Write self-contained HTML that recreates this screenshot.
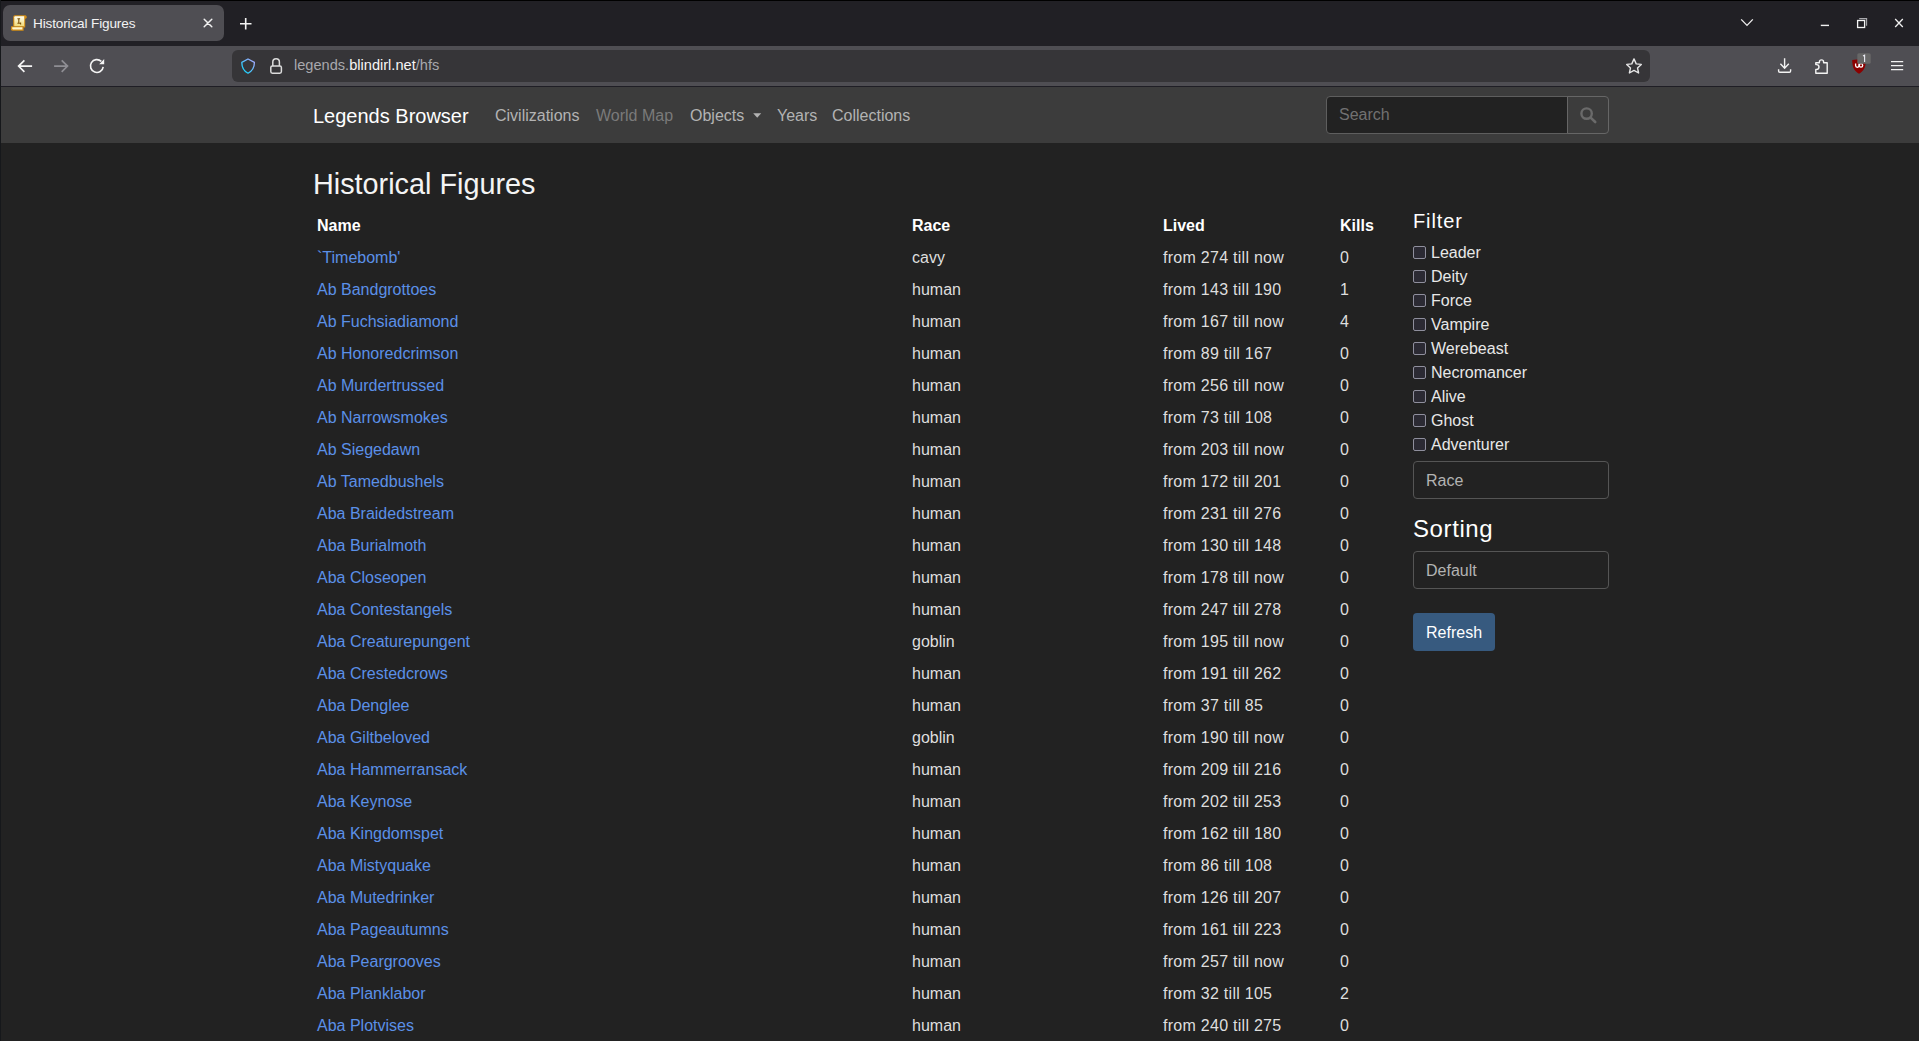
<!DOCTYPE html>
<html><head><meta charset="utf-8">
<style>
*{box-sizing:border-box}
html,body{margin:0;padding:0}
body{width:1919px;height:1041px;overflow:hidden;position:relative;background:#222;font-family:"Liberation Sans",sans-serif;color:#dedede}
.abs{position:absolute}
#wborder{left:0;top:0;width:1px;height:1041px;background:#16181b;z-index:5}
#tborder{left:1px;top:0;width:1918px;height:1px;background:#000;z-index:5}
#tabstrip{left:0;top:0;width:1919px;height:46px;background:#212025}
#tab{left:3px;top:5px;width:221px;height:36px;border-radius:7px;background:#4f4e53}
#tabtitle{left:33px;top:15.5px;font-size:13.6px;letter-spacing:-0.15px;color:#f3f3f3;white-space:nowrap}
#toolbar{left:0;top:46px;width:1919px;height:40px;background:#4f4e53}
#tline{left:0;top:86px;width:1919px;height:1px;background:#1f1e25}
#urlbar{left:232px;top:50px;width:1418px;height:32px;border-radius:6px;background:#363538}
#urltext{left:294px;top:57px;font-size:14.6px;color:#a8a8ad;white-space:nowrap}
#urltext b{font-weight:normal;color:#f6f6f6}
#navbar{left:1px;top:87px;width:1918px;height:56px;background:#3c3c3c}
.brand{left:313px;top:105px;font-size:20px;color:#fff;white-space:nowrap}
.nl{top:107px;font-size:16px;color:#b3b3b3;white-space:nowrap}
.nl.dis{color:#7a7a7a}
#search{left:1326px;top:96px;width:242px;height:38px;background:#222;border:1px solid #5e5e5e;border-radius:4px 0 0 4px}
#search span{position:absolute;left:12px;top:9px;font-size:16px;color:#717171}
#sbtn{left:1567px;top:96px;width:42px;height:38px;border:1px solid #666;border-radius:0 4px 4px 0}
h3{position:absolute;left:313px;top:168px;margin:0;font-weight:normal;font-size:28.8px;color:#f4f4f4;white-space:nowrap}
table{position:absolute;left:313px;top:210px;border-collapse:collapse;table-layout:fixed;width:1076px}
td,th{padding:4px 4px;height:32px;line-height:24px;font-size:16px;text-align:left;white-space:nowrap;vertical-align:top}
th{font-weight:bold;color:#fff}
td{color:#dedede}
td a{color:#5b90e8}
td:nth-child(3){letter-spacing:0.27px}
#side{position:absolute;left:1413px;top:209px;width:196px}
h5{margin:0 0 8px;letter-spacing:0.9px;font-size:20px;line-height:24px;font-weight:normal;color:#fff}
h4{margin:16px 0 7px;letter-spacing:0.6px;font-size:24px;line-height:28.8px;font-weight:normal;color:#fff}
.chk{position:relative;height:24px;line-height:24px;font-size:16px;color:#e8e8e8;padding-left:18px;white-space:nowrap}
.cb{position:absolute;left:0;top:5px;width:13px;height:13px;border:1px solid #8f8f9d;border-radius:2px;background:#2b2a33}
.fc{margin-top:4px;height:38px;border:1px solid #555;border-radius:4px;padding:7px 12px 5px;font-size:16px;line-height:24px;color:#b3b3b3}
.btn{margin-top:24px;width:82px;height:38px;background:#375a7f;border-radius:4px;color:#fff;font-size:16px;line-height:24px;padding:8px 13px 6px}
</style></head><body>
<div class="abs" id="tabstrip"></div>
<div class="abs" id="tab"></div>
<div class="abs" id="tabtitle">Historical Figures</div>
<div class="abs" id="toolbar"></div>
<div class="abs" id="tline"></div>
<div class="abs" id="urlbar"></div>
<div class="abs" id="urltext">legends.<b>blindirl.net</b>/hfs</div>
<div class="abs" id="wborder"></div>
<div class="abs" id="tborder"></div>
<div class="abs" id="navbar"></div>
<svg class="abs" style="left:0;top:0;z-index:4" width="1919" height="143" viewBox="0 0 1919 143">
<defs>
<linearGradient id="shg" x1="0" y1="1" x2="1" y2="0"><stop offset="0" stop-color="#00ddff"/><stop offset="1" stop-color="#b4a4ff"/></linearGradient>
<linearGradient id="scroll" x1="0" y1="0" x2="0" y2="1"><stop offset="0" stop-color="#fffef0"/><stop offset="1" stop-color="#f0d870"/></linearGradient>
</defs>
<!-- favicon scroll -->
<g>
<path d="M13.2 17 Q13.2 15.2 15 15.2 H25.4 Q27 15.6 26.8 17.4 Q26.4 18.6 25.2 18.8 V27.4 L23.6 27.4 V26 H13.2 Z" fill="#d48e16"/>
<path d="M14.3 17.2 Q14.3 16.3 15.2 16.3 H24.2 V26.6 H14.3 Z" fill="url(#scroll)"/>
<path d="M11.4 26.2 Q11 26.2 11 27 V29.4 Q11.2 30.8 12.6 30.8 H23.6 V26.2 Z" fill="#d48e16"/>
<path d="M12.2 27.3 H22.4 V29.4 H13 Q12.2 29.4 12.2 28.6 Z" fill="#fff6cc"/>
<path d="M17.4 18.7 H20.1 M18.8 18.7 V23.2 M17.4 23.2 H20.6 M20.6 22.4 V24.6" stroke="#7e5208" stroke-width="1.1" fill="none"/>
</g>
<!-- tab close -->
<path d="M204.2 19.2 L211.8 26.8 M211.8 19.2 L204.2 26.8" stroke="#f0f0f0" stroke-width="1.5" stroke-linecap="round"/>
<!-- new tab plus -->
<path d="M240 23.7 H251.5 M245.7 18 V29.4" stroke="#f3f3f3" stroke-width="1.6" stroke-linecap="butt"/>
<!-- chevron -->
<path d="M1741.2 19.4 L1747 25.4 L1752.8 19.4" stroke="#f0f0f0" stroke-width="1.3" fill="none"/>
<!-- minimize -->
<path d="M1820.8 25.4 H1829" stroke="#f0f0f0" stroke-width="1.4"/>
<!-- restore -->
<rect x="1857.6" y="20.5" width="7" height="7" stroke="#f4f4f4" stroke-width="1.3" fill="none"/>
<path d="M1859.2 18.6 H1866.6 V25.8" stroke="#a9a9ad" stroke-width="1.1" fill="none"/>
<!-- close -->
<path d="M1895.2 19 L1902.8 27 M1902.8 19 L1895.2 27" stroke="#f0f0f0" stroke-width="1.3"/>
<!-- back -->
<path d="M18.6 66.1 H32.1 M24.4 60.4 L18.6 66.1 L24.4 71.8" stroke="#f5f5f5" stroke-width="1.7" fill="none"/>
<!-- forward -->
<path d="M54.1 66.1 H67.5 M61.7 60.4 L67.5 66.1 L61.7 71.8" stroke="#8f8e94" stroke-width="1.7" fill="none"/>
<!-- reload -->
<path d="M103.2 66.8 A6.4 6.4 0 1 1 101.3 61.4" stroke="#f5f5f5" stroke-width="1.6" fill="none"/>
<path d="M99.2 64.2 L104.2 64.2 L104.2 59 Z" fill="#f5f5f5"/>
<!-- shield -->
<path d="M248 59 L254.4 62.4 C254.4 67.6 252.4 70.8 248 73.2 C243.6 70.8 241.8 67.6 241.8 62.4 Z" stroke="url(#shg)" stroke-width="1.3" fill="none" stroke-linejoin="round"/>
<!-- lock -->
<path d="M272.8 66 V62 A3.3 3.3 0 0 1 279.4 62 V66" stroke="#dcdcdc" stroke-width="1.5" fill="none"/>
<rect x="270.8" y="66" width="10.6" height="7.2" rx="1.6" stroke="#dcdcdc" stroke-width="1.5" fill="none"/>
<!-- star -->
<path d="M1634 58.9 L1636.2 63.9 L1641.3 64.4 L1637.5 67.9 L1638.6 73 L1634 70.4 L1629.4 73 L1630.5 67.9 L1626.7 64.4 L1631.8 63.9 Z" stroke="#e6e6e6" stroke-width="1.4" fill="none" stroke-linejoin="round"/>
<!-- download -->
<path d="M1784.6 58.2 V68.4 M1780.4 63.8 L1784.6 68.2 L1788.8 63.8" stroke="#f3f3f3" stroke-width="1.4" fill="none"/>
<path d="M1778.6 69.2 V71 A1.2 1.2 0 0 0 1779.8 72.2 H1789.4 A1.2 1.2 0 0 0 1790.6 71 V69.2" stroke="#f3f3f3" stroke-width="1.4" fill="none"/>
<!-- puzzle -->
<path d="M1815.8 62.8 H1819.4 V62 A2.1 2.1 0 0 1 1823.6 62 V62.8 H1827.2 V73.2 H1815.8 V69.4 H1816.6 A2.4 2.4 0 0 0 1816.6 64.6 H1815.8 Z" stroke="#f3f3f3" stroke-width="1.4" fill="none" stroke-linejoin="round"/>
<!-- ublock -->
<path d="M1852.2 60 L1859 59.2 L1865.8 60 C1865.8 67.4 1863.6 71.2 1859 73.8 C1854.4 71.2 1852.2 67.4 1852.2 60 Z" fill="#8c0000"/>
<path d="M1855.6 63.4 V65.6 A1.7 1.7 0 0 0 1859 65.6 V63.4" stroke="#fff" stroke-width="1.3" fill="none"/>
<circle cx="1861" cy="65.4" r="1.7" stroke="#fff" stroke-width="1.3" fill="none"/>
<rect x="1857.3" y="53.2" width="13.4" height="10.6" rx="1.6" fill="#676767"/>
<path d="M1863 56 L1864.6 55.2 V62" stroke="#ececf4" stroke-width="1.1" fill="none"/>
<!-- hamburger -->
<path d="M1891 61.7 H1903.2 M1891 65.6 H1903.2 M1891 69.6 H1903.2" stroke="#f3f3f3" stroke-width="1.3"/>
<!-- navbar caret -->
<path d="M753.2 113.2 H761.2 L757.2 117.8 Z" fill="#b3b3b3"/>
<!-- search icon -->
<circle cx="1586.6" cy="113.6" r="5.2" stroke="#6a6a6a" stroke-width="2.4" fill="none"/>
<path d="M1590.6 117.6 L1595.2 122" stroke="#6a6a6a" stroke-width="2.6" stroke-linecap="round"/>
</svg>

<div class="abs brand">Legends Browser</div>
<div class="abs nl" style="left:495px">Civilizations</div>
<div class="abs nl dis" style="left:596px">World Map</div>
<div class="abs nl" style="left:690px">Objects</div>
<div class="abs nl" style="left:777px">Years</div>
<div class="abs nl" style="left:832px">Collections</div>
<div class="abs" id="search"><span>Search</span></div>
<div class="abs" id="sbtn"></div>
<h3>Historical Figures</h3>
<table>
<colgroup><col style="width:595px"><col style="width:251px"><col style="width:177px"><col style="width:53px"></colgroup>
<tr><th>Name</th><th>Race</th><th>Lived</th><th>Kills</th></tr>
<tr><td><a>`Timebomb'</a></td><td>cavy</td><td>from 274 till now</td><td>0</td></tr>
<tr><td><a>Ab Bandgrottoes</a></td><td>human</td><td>from 143 till 190</td><td>1</td></tr>
<tr><td><a>Ab Fuchsiadiamond</a></td><td>human</td><td>from 167 till now</td><td>4</td></tr>
<tr><td><a>Ab Honoredcrimson</a></td><td>human</td><td>from 89 till 167</td><td>0</td></tr>
<tr><td><a>Ab Murdertrussed</a></td><td>human</td><td>from 256 till now</td><td>0</td></tr>
<tr><td><a>Ab Narrowsmokes</a></td><td>human</td><td>from 73 till 108</td><td>0</td></tr>
<tr><td><a>Ab Siegedawn</a></td><td>human</td><td>from 203 till now</td><td>0</td></tr>
<tr><td><a>Ab Tamedbushels</a></td><td>human</td><td>from 172 till 201</td><td>0</td></tr>
<tr><td><a>Aba Braidedstream</a></td><td>human</td><td>from 231 till 276</td><td>0</td></tr>
<tr><td><a>Aba Burialmoth</a></td><td>human</td><td>from 130 till 148</td><td>0</td></tr>
<tr><td><a>Aba Closeopen</a></td><td>human</td><td>from 178 till now</td><td>0</td></tr>
<tr><td><a>Aba Contestangels</a></td><td>human</td><td>from 247 till 278</td><td>0</td></tr>
<tr><td><a>Aba Creaturepungent</a></td><td>goblin</td><td>from 195 till now</td><td>0</td></tr>
<tr><td><a>Aba Crestedcrows</a></td><td>human</td><td>from 191 till 262</td><td>0</td></tr>
<tr><td><a>Aba Denglee</a></td><td>human</td><td>from 37 till 85</td><td>0</td></tr>
<tr><td><a>Aba Giltbeloved</a></td><td>goblin</td><td>from 190 till now</td><td>0</td></tr>
<tr><td><a>Aba Hammerransack</a></td><td>human</td><td>from 209 till 216</td><td>0</td></tr>
<tr><td><a>Aba Keynose</a></td><td>human</td><td>from 202 till 253</td><td>0</td></tr>
<tr><td><a>Aba Kingdomspet</a></td><td>human</td><td>from 162 till 180</td><td>0</td></tr>
<tr><td><a>Aba Mistyquake</a></td><td>human</td><td>from 86 till 108</td><td>0</td></tr>
<tr><td><a>Aba Mutedrinker</a></td><td>human</td><td>from 126 till 207</td><td>0</td></tr>
<tr><td><a>Aba Pageautumns</a></td><td>human</td><td>from 161 till 223</td><td>0</td></tr>
<tr><td><a>Aba Peargrooves</a></td><td>human</td><td>from 257 till now</td><td>0</td></tr>
<tr><td><a>Aba Planklabor</a></td><td>human</td><td>from 32 till 105</td><td>2</td></tr>
<tr><td><a>Aba Plotvises</a></td><td>human</td><td>from 240 till 275</td><td>0</td></tr>
</table>
<div id="side">
<h5>Filter</h5>
<div class="chk"><span class="cb"></span>Leader</div>
<div class="chk"><span class="cb"></span>Deity</div>
<div class="chk"><span class="cb"></span>Force</div>
<div class="chk"><span class="cb"></span>Vampire</div>
<div class="chk"><span class="cb"></span>Werebeast</div>
<div class="chk"><span class="cb"></span>Necromancer</div>
<div class="chk"><span class="cb"></span>Alive</div>
<div class="chk"><span class="cb"></span>Ghost</div>
<div class="chk"><span class="cb"></span>Adventurer</div>
<div class="fc">Race</div>
<h4>Sorting</h4>
<div class="fc" style="margin-top:0">Default</div>
<div class="btn">Refresh</div>
</div>
</body></html>
